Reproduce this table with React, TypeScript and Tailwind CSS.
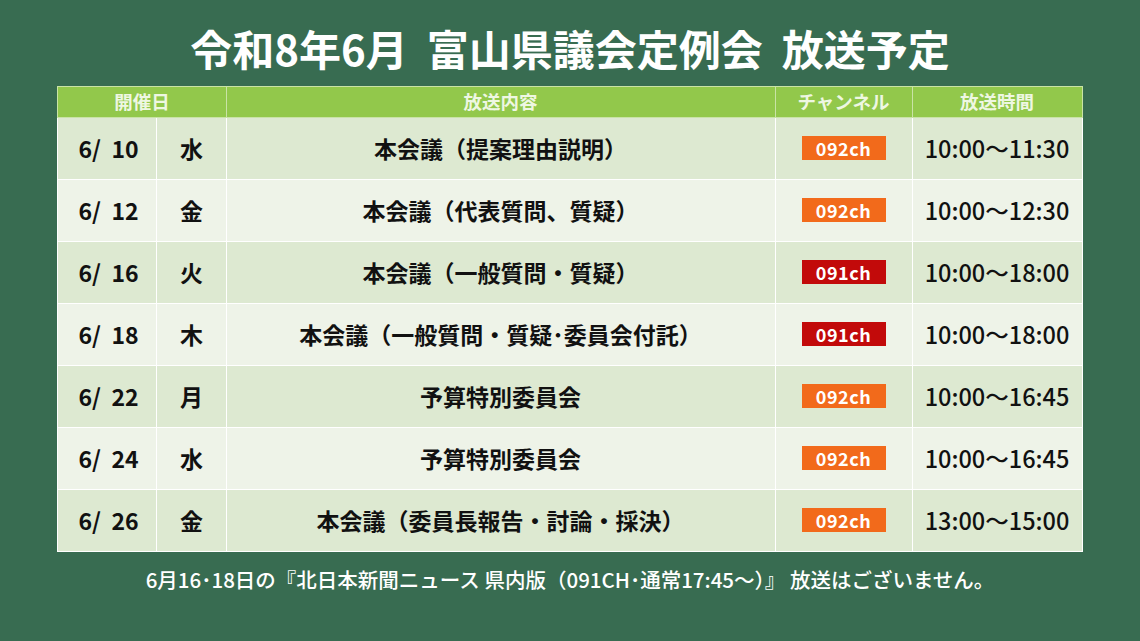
import React from 'react';

type Row = {
  date: string;
  day: string;
  title: string;
  ch: '092ch' | '091ch';
  time: string;
};

const ROWS: Row[] = [
  { date: '10', day: '水', title: '本会議（提案理由説明）', ch: '092ch', time: '10:00〜11:30' },
  { date: '12', day: '金', title: '本会議（代表質問、質疑）', ch: '092ch', time: '10:00〜12:30' },
  { date: '16', day: '火', title: '本会議（一般質問・質疑）', ch: '091ch', time: '10:00〜18:00' },
  { date: '18', day: '木', title: '本会議（一般質問・質疑･委員会付託）', ch: '091ch', time: '10:00〜18:00' },
  { date: '22', day: '月', title: '予算特別委員会', ch: '092ch', time: '10:00〜16:45' },
  { date: '24', day: '水', title: '予算特別委員会', ch: '092ch', time: '10:00〜16:45' },
  { date: '26', day: '金', title: '本会議（委員長報告・討論・採決）', ch: '092ch', time: '13:00〜15:00' },
];

const FONT = { fontFamily: '"Noto Sans CJK JP", "Noto Sans", sans-serif' };

export default function App() {
  return (
    <div
      className="w-[1140px] h-[641px] bg-[#386c51] flex flex-col items-center overflow-hidden"
      style={FONT}
    >
      {/* タイトル */}
      <h1 className="mt-[18px] h-[62px] text-[42px] leading-[60px] font-bold text-white">
        令和8年6月&nbsp;&nbsp;富山県議会定例会&nbsp;&nbsp;放送予定
      </h1>

      {/* 放送スケジュール表 */}
      <table className="mt-[6px] w-[1024px] border-collapse table-fixed">
        <colgroup>
          <col className="w-[99px]" />
          <col className="w-[69px]" />
          <col className="w-[549px]" />
          <col className="w-[137px]" />
          <col className="w-[170px]" />
        </colgroup>
        <thead>
          <tr className="h-[31px] bg-[#92c84b] text-[#eef7e2] text-[18.5px]">
            <th colSpan={2} className="border border-[#c9e3a6] font-semibold">開催日</th>
            <th className="border border-[#c9e3a6] font-semibold">放送内容</th>
            <th className="border border-[#c9e3a6] font-semibold">チャンネル</th>
            <th className="border border-[#c9e3a6] font-semibold">放送時間</th>
          </tr>
        </thead>
        <tbody>
          {ROWS.map((r, i) => (
            <tr
              key={r.date}
              className={
                'h-[62px] text-[#111] ' +
                (i % 2 === 0 ? 'bg-[#dde9d1]' : 'bg-[#eef3e8]')
              }
            >
              <td className="border border-white pl-[20px] text-[23px] font-bold whitespace-pre">
                {'6/  ' + r.date}
              </td>
              <td className="border border-white text-center text-[23px] font-bold">{r.day}</td>
              <td className="border border-white text-center text-[23px] font-bold">{r.title}</td>
              <td className="border border-white text-center">
                <span
                  className={
                    'inline-block w-[84px] h-[24px] leading-[24px] text-[18px] font-bold text-white tracking-[0.5px] ' +
                    (r.ch === '092ch' ? 'bg-[#f26a1b]' : 'bg-[#c20a0a]')
                  }
                >
                  {r.ch}
                </span>
              </td>
              <td className="border border-white text-center text-[23.5px] font-medium">{r.time}</td>
            </tr>
          ))}
        </tbody>
      </table>

      <p className="mt-[12px] text-[20.5px] text-white font-medium">
        6月16･18日の『北日本新聞ニュース 県内版（091CH･通常17:45〜）』 放送はございません。
      </p>
    </div>
  );
}
